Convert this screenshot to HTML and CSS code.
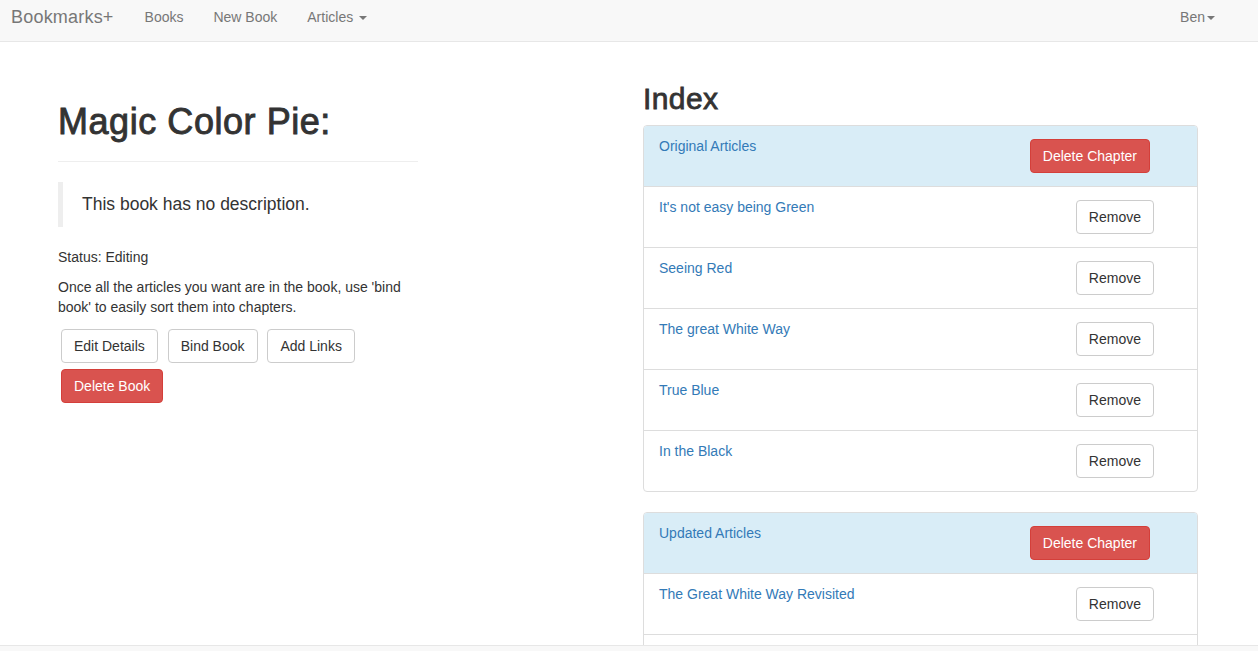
FILE: index.html
```html
<!DOCTYPE html>
<html lang="en">
<head>
<meta charset="utf-8">
<title>Bookmarks+</title>
<link rel="stylesheet" href="styles.css">
</head>
<body>
<nav class="navbar">
  <div class="nav-left">
    <a class="brand" href="#">Bookmarks+</a>
    <a class="nav-link" href="#">Books</a>
    <a class="nav-link" href="#">New Book</a>
    <a class="nav-link" href="#">Articles <span class="caret"></span></a>
  </div>
  <a class="nav-link" href="#">Ben<span class="caret"></span></a>
</nav>

<main class="main">
  <section class="left">
    <div class="page-header">
      <h1>Magic Color Pie:</h1>
    </div>
    <blockquote class="quote">This book has no description.</blockquote>
    <p>Status: Editing</p>
    <p>Once all the articles you want are in the book, use 'bind book' to easily sort them into chapters.</p>
    <div class="actions">
      <a class="btn" href="#">Edit Details</a>
      <a class="btn" href="#">Bind Book</a>
      <a class="btn" href="#">Add Links</a>
      <a class="btn btn-danger" href="#">Delete Book</a>
    </div>
  </section>

  <section class="right">
    <h2>Index</h2>

    <div class="panel">
      <div class="panel-heading">
        <a class="link" href="#">Original Articles</a>
        <a class="btn btn-danger btn-chapter" href="#">Delete Chapter</a>
      </div>
      <div class="item"><a class="link" href="#">It's not easy being Green</a><a class="btn btn-remove" href="#">Remove</a></div>
      <div class="item"><a class="link" href="#">Seeing Red</a><a class="btn btn-remove" href="#">Remove</a></div>
      <div class="item"><a class="link" href="#">The great White Way</a><a class="btn btn-remove" href="#">Remove</a></div>
      <div class="item"><a class="link" href="#">True Blue</a><a class="btn btn-remove" href="#">Remove</a></div>
      <div class="item"><a class="link" href="#">In the Black</a><a class="btn btn-remove" href="#">Remove</a></div>
    </div>

    <div class="panel">
      <div class="panel-heading">
        <a class="link" href="#">Updated Articles</a>
        <a class="btn btn-danger btn-chapter" href="#">Delete Chapter</a>
      </div>
      <div class="item"><a class="link" href="#">The Great White Way Revisited</a><a class="btn btn-remove" href="#">Remove</a></div>
      <div class="item item-empty"></div>
    </div>
  </section>
</main>

<footer class="bottom-bar"></footer>
</body>
</html>
```

FILE: styles.css
```css
* { box-sizing: border-box; }

html, body { height: 100%; overflow: hidden; }

body {
  margin: 0;
  font-family: "Liberation Sans", Arial, sans-serif;
  font-size: 14px;
  line-height: 20px;
  color: #333;
  background: #fff;
}

a { text-decoration: none; }

/* Navbar */
.navbar {
  display: flex;
  justify-content: space-between;
  align-items: flex-start;
  height: 42px;
  padding: 0 28px 0 11px;
  background: #f8f8f8;
  border-bottom: 1px solid #e7e7e7;
}

.nav-left { display: flex; }

.brand {
  font-size: 18px;
  line-height: 20px;
  padding: 7px 16px 7px 0;
  color: #777;
  letter-spacing: 0.2px;
}

.nav-link {
  padding: 7px 15px;
  color: #777;
}

.caret {
  display: inline-block;
  width: 0;
  height: 0;
  margin-left: 2px;
  vertical-align: middle;
  border-top: 4px solid #777;
  border-left: 4px solid transparent;
  border-right: 4px solid transparent;
}

/* Main layout */
.main {
  display: flex;
  align-items: flex-start;
  padding: 20px 58px 0;
}

.left { width: 360px; }

.right {
  width: 555px;
  margin-left: 225px;
}

.page-header {
  margin: 40px 0 20px;
  padding-bottom: 9px;
  border-bottom: 1px solid #eee;
}

h1 {
  margin: 0 0 10px;
  font-size: 36px;
  line-height: 1.1;
  font-weight: 500;
  color: #333;
  letter-spacing: 0.55px;
  -webkit-text-stroke: 0.9px #333;
}

h2 {
  margin: 20px 0 10px;
  font-size: 30px;
  line-height: 1.1;
  font-weight: 500;
  color: #333;
  letter-spacing: 0.4px;
  -webkit-text-stroke: 0.8px #333;
}

.quote {
  margin: 0 0 20px;
  padding: 10px 19px;
  font-size: 17.5px;
  line-height: 25px;
  border-left: 5px solid #eee;
}

p { margin: 0 0 10px; }

.actions { margin-top: -1px; }

/* Buttons */
.btn {
  display: inline-block;
  margin: 3px;
  padding: 6px 12px;
  font-size: 14px;
  line-height: 20px;
  color: #333;
  background: #fff;
  border: 1px solid #ccc;
  border-radius: 4px;
  white-space: nowrap;
}

.btn-danger {
  color: #fff;
  background: #d9534f;
  border-color: #d43f3a;
}

.btn-chapter { margin: 3px 47px 0 0; }
.btn-remove { margin: 3px 43px 0 0; }

/* Panels */
.link { color: #337ab7; }

.panel {
  margin-bottom: 20px;
  border: 1px solid #ddd;
  border-radius: 4px;
  background: #fff;
}

.panel-heading {
  display: flex;
  justify-content: space-between;
  align-items: flex-start;
  padding: 10px 0 13px 15px;
  background: #d9edf7;
  border-bottom: 1px solid #ddd;
  border-radius: 3px 3px 0 0;
}

.item {
  display: flex;
  justify-content: space-between;
  align-items: flex-start;
  padding: 10px 0 13px 15px;
}

.item-empty { height: 61px; }

.item + .item { border-top: 1px solid #ddd; }

.bottom-bar {
  position: fixed;
  left: 0;
  right: 0;
  bottom: 0;
  height: 6px;
  background: #f8f8f8;
  border-top: 1px solid #e7e7e7;
}
```
